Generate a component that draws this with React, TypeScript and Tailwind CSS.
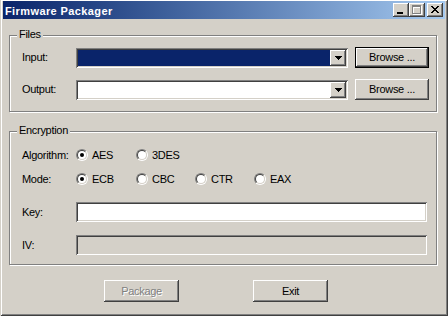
import React from 'react'

const sunken =
  'shadow-[inset_1px_1px_#808080,inset_-1px_-1px_#ffffff,inset_2px_2px_#404040,inset_-2px_-2px_#d4d0c8]'
const raised =
  'shadow-[inset_-1px_-1px_#404040,inset_1px_1px_#ffffff,inset_-2px_-2px_#808080,inset_2px_2px_#d4d0c8]'

function CapButton({ children, className = '' }: { children: React.ReactNode; className?: string }) {
  return (
    <div
      className={`w-[16px] h-[14px] bg-[#d4d0c8] shadow-[inset_-1px_-1px_#404040,inset_1px_1px_#ffffff,inset_-2px_-2px_#808080] ${className}`}
    >
      <svg width="16" height="14" viewBox="0 0 16 14" shapeRendering="crispEdges">
        {children}
      </svg>
    </div>
  )
}

const xRows = ['##....##', '.##..##.', '..####..', '...##...', '..####..', '.##..##.', '##....##']

function TitleBar() {
  return (
    <div className="h-[18px] flex items-start bg-linear-to-r from-[#0a246a] to-[#a6caf0] px-[2px]">
      <span className="mt-[4px] font-bold text-white tracking-[0.4px]">Firmware Packager</span>
      <div className="ml-auto mt-[2px] flex">
        <CapButton>
          <rect x="4" y="9" width="6" height="2" fill="#000" />
        </CapButton>
        <CapButton>
          <g fill="#ffffff">
            <rect x="4" y="3" width="9" height="2" />
            <rect x="4" y="3" width="1" height="9" />
            <rect x="12" y="3" width="1" height="9" />
            <rect x="4" y="11" width="9" height="1" />
          </g>
          <g fill="#808080">
            <rect x="3" y="2" width="9" height="2" />
            <rect x="3" y="2" width="1" height="9" />
            <rect x="11" y="2" width="1" height="9" />
            <rect x="3" y="10" width="9" height="1" />
          </g>
        </CapButton>
        <CapButton className="ml-[2px]">
          {xRows.map((row, y) =>
            row.split('').map((c, x) =>
              c === '#' ? <rect key={`${x}-${y}`} x={4 + x} y={3 + y} width="1" height="1" fill="#000" /> : null
            )
          )}
        </CapButton>
      </div>
    </div>
  )
}

function Group({
  label,
  className,
  children,
}: {
  label: string
  className: string
  children: React.ReactNode
}) {
  return (
    <div
      className={`relative w-[428px] border border-[#808080] shadow-[inset_1px_1px_#ffffff,1px_1px_#ffffff] pl-[12px] ${className}`}
    >
      <span className="absolute left-[7px] top-[-8px] px-[2px] bg-[#d4d0c8]">{label}</span>
      {children}
    </div>
  )
}

function Button({
  children,
  isDefault,
  disabled,
  className = '',
}: {
  children: React.ReactNode
  isDefault?: boolean
  disabled?: boolean
  className?: string
}) {
  return (
    <div
      className={`flex items-center justify-center bg-[#d4d0c8] ${raised} ${
        isDefault ? 'border border-black' : ''
      } ${disabled ? 'text-[#808080] [text-shadow:1px_1px_0_#ffffff]' : ''} ${className}`}
    >
      {children}
    </div>
  )
}

function Combo({ selected }: { selected?: boolean }) {
  return (
    <div className={`w-[272px] h-[20px] p-[2px] flex bg-white ${sunken}`}>
      <div className={`flex-1 ${selected ? 'bg-[#0a246a]' : 'bg-white'}`} />
      <div className={`w-[16px] h-full bg-[#d4d0c8] flex items-center justify-center ${raised}`}>
        <svg width="7" height="4" viewBox="0 0 7 4" shapeRendering="crispEdges">
          <rect x="0" y="0" width="7" height="1" fill="#000" />
          <rect x="1" y="1" width="5" height="1" fill="#000" />
          <rect x="2" y="2" width="3" height="1" fill="#000" />
          <rect x="3" y="3" width="1" height="1" fill="#000" />
        </svg>
      </div>
    </div>
  )
}

function Radio({ label, checked, w }: { label: string; checked?: boolean; w: string }) {
  return (
    <div className={`flex items-center ${w}`}>
      <span className="w-[12px] h-[12px] rounded-full border border-t-[#808080] border-l-[#808080] border-r-white border-b-white flex shrink-0">
        <span className="flex-1 rounded-full border border-t-[#404040] border-l-[#404040] border-r-[#d4d0c8] border-b-[#d4d0c8] bg-white flex items-center justify-center">
          {checked && <span className="w-[4px] h-[4px] rounded-full bg-black" />}
        </span>
      </span>
      <span className="ml-[4px]">{label}</span>
    </div>
  )
}

export default function App() {
  return (
    <div className="w-[448px] h-[316px] bg-[#d4d0c8] pt-[1px] px-[3px] pb-[3px] flex flex-col overflow-hidden select-none text-black text-[11px] leading-[13px] tracking-[-0.3px] font-['Liberation_Sans',Arial,sans-serif] shadow-[inset_1px_0_#d4d0c8,inset_-1px_-1px_#404040,inset_2px_1px_#ffffff,inset_-2px_-2px_#808080]">
      <TitleBar />
      <div className="flex flex-col pl-[6px]">
        <Group label="Files" className="mt-[16px] h-[77px] pt-[11px]">
          <div className="flex items-end h-[21px]">
            <span className="w-[54px] self-center">Input:</span>
            <Combo selected />
            <Button isDefault className="ml-[7px] w-[74px] h-[21px]">
              Browse ...
            </Button>
          </div>
          <div className="flex items-end h-[21px] mt-[11px]">
            <span className="w-[54px] self-center">Output:</span>
            <Combo />
            <Button className="ml-[7px] w-[74px] h-[21px]">Browse ...</Button>
          </div>
        </Group>

        <Group label="Encryption" className="mt-[19px] h-[134px] pt-[17px]">
          <div className="flex items-center h-[12px]">
            <span className="w-[54px]">Algorithm:</span>
            <Radio label="AES" checked w="w-[60px]" />
            <Radio label="3DES" w="w-[60px]" />
          </div>
          <div className="flex items-center h-[12px] mt-[12px]">
            <span className="w-[54px]">Mode:</span>
            <Radio label="ECB" checked w="w-[60px]" />
            <Radio label="CBC" w="w-[59px]" />
            <Radio label="CTR" w="w-[59px]" />
            <Radio label="EAX" w="w-[60px]" />
          </div>
          <div className="flex items-center h-[20px] mt-[17px]">
            <span className="w-[54px]">Key:</span>
            <div className={`w-[351px] h-[20px] bg-white ${sunken}`} />
          </div>
          <div className="flex items-center h-[20px] mt-[13px]">
            <span className="w-[54px]">IV:</span>
            <div className={`w-[351px] h-[20px] bg-[#d4d0c8] ${sunken}`} />
          </div>
        </Group>

        <div className="mt-[15px] ml-[95px] flex gap-[74px]">
          <Button disabled className="w-[75px] h-[22px]">
            Package
          </Button>
          <Button className="w-[75px] h-[22px]">Exit</Button>
        </div>
      </div>
    </div>
  )
}
